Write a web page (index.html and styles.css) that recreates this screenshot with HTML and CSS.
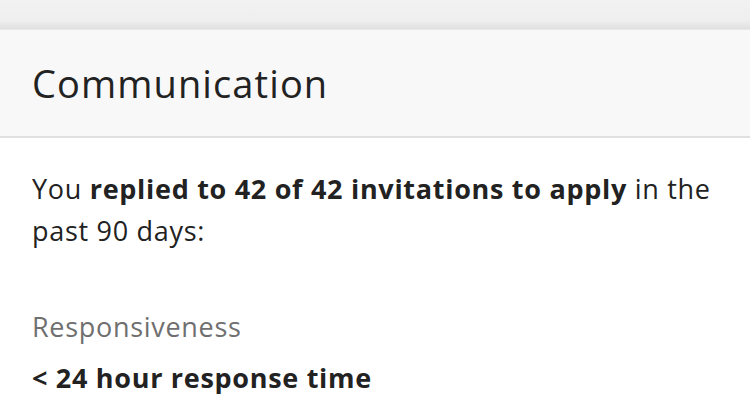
FILE: index.html
```html
<!DOCTYPE html>
<html lang="en">

<head>
    <meta charset="UTF-8">
    <meta name="viewport" content="width=device-width, initial-scale=1.0">
    <title>Communication</title>
    <link rel="stylesheet" href="styles.css">
</head>

<body>
    <div class="topbar"></div>

    <div class="card">
        <div class="card-header">
            <h2>Communication</h2>
        </div>

        <div class="card-body">
            <p class="summary">You <strong>replied to 42 of 42 invitations to apply</strong> in the past 90 days:</p>

            <div class="stat">
                <div class="stat-label">Responsiveness</div>
                <div class="stat-value">&lt; 24 hour response time</div>
            </div>
        </div>
    </div>
</body>

</html>
```

FILE: styles.css
```css
body {
    margin: 0;
    font-family: "Open Sans", Arial, sans-serif;
    color: #222;
    background-color: #fff;
    overflow: hidden;
}

.topbar {
    height: 29px;
    background: linear-gradient(to bottom, #f2f2f2 0%, #efefef 70%, #e0e0e2 100%);
}

.card-header {
    height: 106px;
    display: flex;
    align-items: center;
    padding: 0 32px;
    background-color: #f8f8f8;
    border-top: 1px solid #e9e9e9;
    border-bottom: 2px solid #e0e0e0;
}

.card-header h2 {
    margin: 0;
    font-size: 38px;
    font-weight: 400;
    letter-spacing: 1.1px;
    color: #222;
}

.card-body {
    padding: 30px 32px 0;
}

.summary,
.stat-label,
.stat-value {
    font-size: 27px;
    letter-spacing: 0.7px;
}

.summary {
    margin: 0;
    line-height: 42px;
}

.summary strong {
    font-weight: 700;
}

.stat {
    margin-top: 55px;
}

.stat-label {
    line-height: 40px;
    color: #6f6f6f;
}

.stat-value {
    margin-top: 11px;
    line-height: 40px;
    font-weight: 700;
}
```
